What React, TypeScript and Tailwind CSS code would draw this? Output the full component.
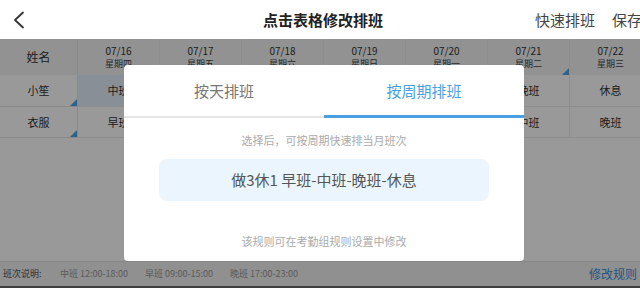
import React from "react";

const days = [
  { d: "07/16", w: "星期四" },
  { d: "07/17", w: "星期五" },
  { d: "07/18", w: "星期六" },
  { d: "07/19", w: "星期日" },
  { d: "07/20", w: "星期一" },
  { d: "07/21", w: "星期二" },
  { d: "07/22", w: "星期三" },
];

const rows = [
  { name: "小笙", cells: ["中班", "晚班", "休息", "早班", "中班", "晚班", "休息"] },
  { name: "衣服", cells: ["早班", "中班", "晚班", "休息", "早班", "中班", "晚班"] },
];

function Tri() {
  return (
    <span className="absolute right-0 bottom-0 w-0 h-0 border-l-[7px] border-l-transparent border-b-[7px] border-b-[#4fa3dc]" />
  );
}

export default function App() {
  return (
    <div
      className="relative w-[640px] h-[288px] overflow-hidden bg-white text-[#333]"
      style={{ fontFamily: '"Noto Sans CJK SC", "Noto Sans", sans-serif' }}
    >
      {/* top bar */}
      <div className="h-[39px] grid grid-cols-[1fr_auto_1fr] items-center">
        <div className="pl-[13px] flex items-center">
          <svg width="12" height="18" viewBox="0 0 12 18" fill="none">
            <polyline points="10,1.5 2,9 10,16.5" stroke="#333" strokeWidth="1.8" strokeLinejoin="round" strokeLinecap="round" />
          </svg>
        </div>
        <div className="text-[15px] font-bold text-[#222] leading-none pl-[6px]">点击表格修改排班</div>
        <div className="flex justify-end gap-[17px] mr-[-2px] text-[15px] text-[#444] leading-none whitespace-nowrap">
          <span>快速排班</span>
          <span>保存</span>
        </div>
      </div>

      {/* table */}
      <div className="grid grid-cols-[78px_repeat(7,82px)] w-[652px]">
        <div className="h-[36px] bg-[#f3f3f3] border-r border-[#e5e5e5] flex items-center justify-center text-[12px] text-[#333]">
          姓名
        </div>
        {days.map((x, i) => (
          <div
            key={x.d}
            className="relative h-[36px] bg-[#f3f3f3] border-r border-[#ebebeb] flex flex-col items-center justify-center leading-[13px]"
          >
            <span className="text-[10px] text-[#333]">{x.d}</span>
            <span className="text-[9px] text-[#444]">{x.w}</span>
            {i === 5 && <Tri />}
          </div>
        ))}
        {rows.map((r, ri) => (
          <React.Fragment key={r.name}>
            <div
              className={`relative ${ri === 0 ? "h-[32px]" : "h-[31px]"} border-b border-r border-[#e5e5e5] flex items-center justify-center text-[11px]`}
            >
              {r.name}
              <Tri />
            </div>
            {r.cells.map((c, ci) => (
              <div
                key={ci}
                className={`${ri === 0 ? "h-[32px]" : "h-[31px]"} border-b border-r border-[#ebebeb] flex items-center justify-center text-[11px] ${ri === 0 && ci === 0 ? "bg-[#e4eefa]" : ""}`}
              >
                {c}
              </div>
            ))}
          </React.Fragment>
        ))}
      </div>

      {/* bottom bar */}
      <div className="absolute left-0 right-0 bottom-0 h-[27px] bg-[#f0f0f0] border-t border-[#e2e2e2] border-b-2 border-b-[#6a6a6a] flex items-center text-[9px] whitespace-nowrap">
        <span className="pl-[3px] w-[60px] text-[#555]">班次说明:</span>
        <span className="w-[85px] text-[#999]">中班 12:00-18:00</span>
        <span className="w-[85px] text-[#999]">早班 09:00-15:00</span>
        <span className="text-[#999]">晚班 17:00-23:00</span>
        <span className="ml-auto pr-[3px] text-[12px] text-[#3b8fd6]">修改规则</span>
      </div>

      {/* overlay */}
      <div className="absolute left-0 right-0 top-[39px] bottom-0 bg-black/40" />

      {/* modal */}
      <div className="absolute left-[124px] top-[65px] w-[400px] h-[196px] bg-white rounded-[4px] flex flex-col items-stretch">
        <div className="flex h-[53px]">
          <div className="flex-1 flex items-center justify-center pt-[2px] border-b-2 border-[#e6e6e6] text-[15px] text-[#777]">
            按天排班
          </div>
          <div className="flex-1 flex items-center justify-center pt-[3px] border-b-[3px] border-[#4a9fe0] text-[15px] text-[#4a9fe0]">
            按周期排班
          </div>
        </div>
        <div className="mt-[14px] text-center text-[11px] leading-4 text-[#aaa]">选择后，可按周期快速排当月班次</div>
        <div className="mx-[35px] mt-[11px] h-[42px] rounded-[8px] bg-[#eaf5fd] flex items-center justify-center text-[15px] text-[#555]">
          做3休1 早班-中班-晚班-休息
        </div>
        <div className="mt-[32px] text-center text-[11px] leading-4 text-[#aaa]">该规则可在考勤组规则设置中修改</div>
      </div>
    </div>
  );
}
